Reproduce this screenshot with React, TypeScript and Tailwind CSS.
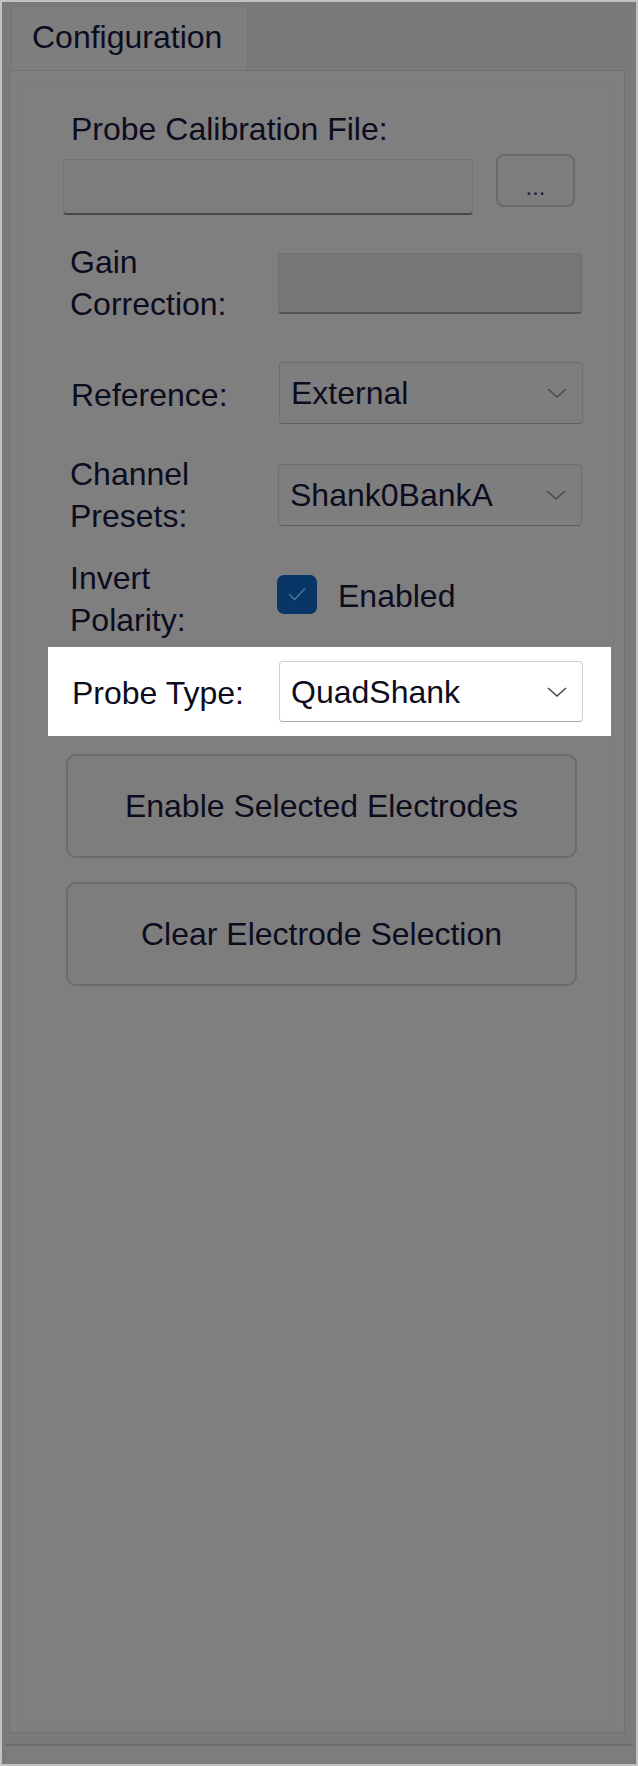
import React from "react";

const Chevron = () => (
  <svg width="22" height="14" viewBox="0 0 22 14" fill="none" className="shrink-0">
    <path d="M2 3 L11 11 L20 3" stroke="#4a4a4a" strokeWidth="1.6" fill="none" />
  </svg>
);

const Combo = ({ text, white }: { text: string; white?: boolean }) => (
  <div
    className={
      white
        ? "w-[304px] h-[61px] flex items-center justify-between pl-[11px] pr-[14px] rounded-[4px] bg-white border border-[#cfcfcf] border-b-[#a9a9a9]"
        : "w-[304px] h-[62px] flex items-center justify-between pl-[11px] pr-[14px] rounded-[4px] bg-[#7e7e7e] border border-[#6e6e6e] border-b-[#5e5e5e]"
    }
  >
    <span>{text}</span>
    <Chevron />
  </div>
);

export default function App() {
  return (
    <div
      className="w-[638px] h-[1766px] bg-[#c2c2c2] p-[2px] text-[32px] leading-[42px] text-[#0c0c1e]"
      style={{ fontFamily: '"Liberation Sans", Arial, sans-serif' }}
    >
      <div className="h-full bg-[#7a7a7a] flex flex-col pl-[7px] pr-[11px] pt-[4px]">
        {/* tab header */}
        <div className="flex">
          <div className="ml-[2px] w-[237px] h-[64px] bg-[#7e7e7e] border border-b-0 border-[#747474] flex items-center pl-[20px] pb-[3px]">
            Configuration
          </div>
        </div>
        {/* tab page */}
        <div className="h-[1663px] border border-[#727272] bg-[#7f7f7f] p-[10px]">
          <div className="h-full border border-[#7b7b7b] flex flex-col pl-[50px]">
            <div className="mt-[27px] h-[40px] leading-[40px]">Probe Calibration File:</div>
            <div className="mt-[5px] flex items-start">
              <div className="-ml-[8px] mt-[5px] w-[410px] h-[56px] rounded-[4px] bg-[#7d7d7d] border border-[#727272] border-b-2 border-b-[#484848]" />
              <div className="ml-[23px] w-[79px] h-[53px] rounded-[8px] bg-[#7d7d7d] border-2 border-[#6a6a6a] flex justify-center items-end pb-[6px]">
                <span className="leading-[24px] text-[24px] text-[#2a1a3a]">...</span>
              </div>
            </div>
            <div className="mt-[26px] h-[84px] flex items-center">
              <div className="w-[208px] -ml-[1px]">
                <div>Gain</div>
                <div>Correction:</div>
              </div>
              <div className="w-[304px] h-[61px] rounded-[4px] bg-[#767676] border border-[#717171] border-b-2 border-b-[#555555]" />
            </div>
            <div className="mt-[37px] h-[62px] flex items-center">
              <div className="w-[208px] pt-[4px]">Reference:</div>
              <Combo text="External" />
            </div>
            <div className="mt-[29px] h-[84px] flex items-center">
              <div className="w-[208px] -ml-[1px]">
                <div>Channel</div>
                <div>Presets:</div>
              </div>
              <Combo text="Shank0BankA" />
            </div>
            <div className="mt-[20px] h-[84px] flex items-center">
              <div className="w-[207px] -ml-[1px]">
                <div>Invert</div>
                <div>Polarity:</div>
              </div>
              <div className="w-[40px] h-[39px] -mt-[10px] rounded-[7px] bg-[#083767] flex items-center justify-center">
                <svg width="22" height="18" viewBox="0 0 22 18" fill="none">
                  <path d="M3 9 L8.5 14.5 L19 3.5" stroke="#4a719b" strokeWidth="1.6" fill="none" />
                </svg>
              </div>
              <span className="ml-[21px] -mt-[7px]">Enabled</span>
            </div>
            <div className="mt-[6px] -ml-[23px] w-[563px] h-[89px] bg-white flex items-center pl-[24px]">
              <div className="w-[207px] pt-[3px]">Probe Type:</div>
              <Combo text="QuadShank" white />
            </div>
            <div className="mt-[18px] -ml-[5px] w-[511px] h-[104px] rounded-[10px] bg-[#7d7d7d] border-2 border-[#6b6b6b] flex items-center justify-center">
              Enable Selected Electrodes
            </div>
            <div className="mt-[24px] -ml-[5px] w-[511px] h-[104px] rounded-[10px] bg-[#7d7d7d] border-2 border-[#6b6b6b] flex items-center justify-center">
              Clear Electrode Selection
            </div>
          </div>
        </div>
        <div className="mt-[11px] h-[2px] bg-[#6a6a6a] -ml-[3px] -mr-[8px]" />
        <div className="flex-1 bg-[#7d7d7d] -ml-[3px] -mr-[8px]" />
      </div>
    </div>
  );
}
